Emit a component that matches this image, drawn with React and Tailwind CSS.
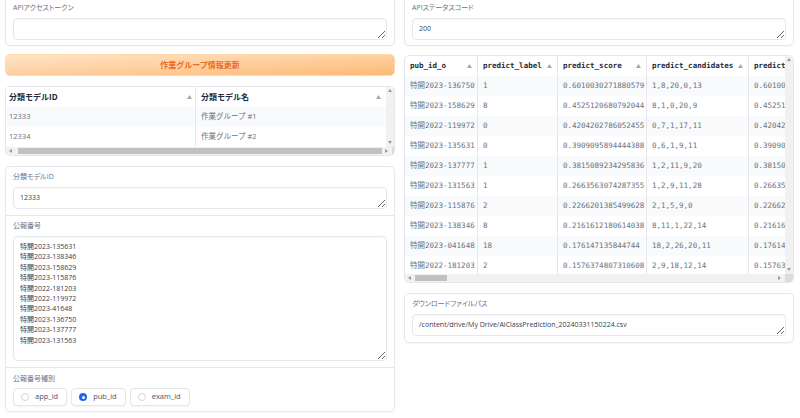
import React from 'react';

const sans = "font-['Open_Sans','Noto_Sans_CJK_JP',sans-serif]";
const mono = "font-['DejaVu_Sans_Mono','Noto_Sans_CJK_JP',monospace]";

const SortArrow = () => (
  <svg width="5" height="4" viewBox="0 0 5 4" className="shrink-0">
    <path d="M2.5 0 L5 4 L0 4 Z" fill="#a3a8b0" />
  </svg>
);

const Tri = ({ dir }) => {
  const d = {
    up: 'M2 0 L4 3 L0 3 Z',
    down: 'M0 0 L4 0 L2 3 Z',
    left: 'M3 0 L3 4 L0 2 Z',
    right: 'M0 0 L3 2 L0 4 Z',
  }[dir];
  return (
    <svg width="4" height="4" viewBox="0 0 4 4">
      <path d={d} fill="#9a9a9a" />
    </svg>
  );
};

const Label = ({ children }) => (
  <div className={`${sans} text-[7px] leading-[10px] text-gray-500 [font-feature-settings:'palt']`}>{children}</div>
);

const Field = ({ value, h }) => (
  <textarea
    readOnly
    defaultValue={value}
    className={`${sans} block w-full ${h} border border-gray-200 rounded-[4px] px-[6px] py-[5px] text-[7px] leading-[10.4px] text-gray-700 bg-white shadow-[inset_0_1px_1px_rgba(0,0,0,0.03)] outline-none`}
  />
);

const HScroll = ({ thumb }) => (
  <div className="flex h-[8px] bg-[#f1f1f1]">
    <div className="flex-1 flex items-center">
      <div className="w-[10px] flex justify-center"><Tri dir="left" /></div>
      <div className="flex-1 h-[6px] relative">
        <div className={`h-full bg-[#c1c1c1] ${thumb}`} />
      </div>
      <div className="w-[10px] flex justify-center"><Tri dir="right" /></div>
    </div>
    <div className="w-[8px] bg-[#dcdcdc]" />
  </div>
);

const VScroll = () => (
  <div className="w-[8px] bg-[#f1f1f1] flex flex-col justify-between items-center py-[2px]">
    <Tri dir="up" />
    <Tri dir="down" />
  </div>
);

const groups = [
  ['12333', '作業グループ #1'],
  ['12334', '作業グループ #2'],
];

const preds = [
  ['特開2023-136750', '1', '0.6010030271880579', '1,8,20,0,13'],
  ['特開2023-158629', '8', '0.4525120680792044', '8,1,0,20,9'],
  ['特開2022-119972', '0', '0.4204202786052455', '0,7,1,17,11'],
  ['特開2023-135631', '0', '0.3909095894444388', '0,6,1,9,11'],
  ['特開2023-137777', '1', '0.3815089234295836', '1,2,11,9,20'],
  ['特開2023-131563', '1', '0.2663563074287355', '1,2,9,11,28'],
  ['特開2023-115876', '2', '0.2266201385499628', '2,1,5,9,0'],
  ['特開2023-138346', '8', '0.2161612180614038', '8,11,1,22,14'],
  ['特開2023-041648', '18', '0.176147135844744', '18,2,26,20,11'],
  ['特開2022-181203', '2', '0.1576374807310608', '2,9,18,12,14'],
];

const pubNumbers = [
  '特開2023-135631',
  '特開2023-138346',
  '特開2023-158629',
  '特開2023-115876',
  '特開2022-181203',
  '特開2022-119972',
  '特開2023-41648',
  '特開2023-136750',
  '特開2023-137777',
  '特開2023-131563',
].join('\n');

const predCols = [
  { name: 'pub_id_o', w: 'w-[73px]' },
  { name: 'predict_label', w: 'w-[80px]' },
  { name: 'predict_score', w: 'w-[89px]' },
  { name: 'predict_candidates', w: 'w-[102px]' },
  { name: 'predict_score_max', w: 'w-[100px]' },
];

export default function App() {
  return (
    <div className="w-[800px] h-[418px] bg-white overflow-hidden">
      <div className="flex gap-[9px] px-[5px] -mt-[3px]">
        {/* Left column */}
        <div className="w-[390px] flex flex-col">
          <div className="border border-gray-200 rounded-[5px] px-[7px] pt-[5px] pb-[5px] shadow-[0_1px_2px_rgba(0,0,0,0.04)]">
            <Label>APIアクセストークン</Label>
            <div className="mt-[5px]"><Field value="" h="h-[22px]" /></div>
          </div>

          <button className={`${sans} mt-[8px] h-[22px] rounded-[5px] border border-orange-200 bg-gradient-to-br from-[#fee4c7] to-[#fdba74] text-[8px] font-semibold text-[#ea6a1f]`}>
            作業グループ情報更新
          </button>

          {/* Group table */}
          <div className="mt-[10px] border border-gray-200 rounded-[5px] overflow-hidden">
            <div className="flex">
              <div className="flex-1">
                <div className={`${sans} flex h-[20px] items-center text-[8px] font-bold text-gray-800 bg-white`}>
                  <div className="w-[190px] h-full flex items-center justify-between px-[3px] border-r border-gray-200">
                    <span>分類モデルID</span><SortArrow />
                  </div>
                  <div className="flex-1 h-full flex items-center justify-between px-[5px]">
                    <span>分類モデル名</span><SortArrow />
                  </div>
                </div>
                {groups.map((g, i) => (
                  <div key={g[0]} className={`${sans} flex h-[20px] items-center text-[7.5px] text-gray-500 ${i % 2 === 0 ? 'bg-gray-50' : 'bg-white'}`}>
                    <div className="w-[190px] h-full flex items-center px-[3px] border-r border-gray-200">{g[0]}</div>
                    <div className="flex-1 h-full flex items-center px-[5px]">{g[1]}</div>
                  </div>
                ))}
              </div>
              <VScroll />
            </div>
            <HScroll thumb="ml-[2px] w-[364px]" />
          </div>

          {/* Form block */}
          <div className="mt-[10px] border border-gray-200 rounded-[5px] shadow-[0_1px_2px_rgba(0,0,0,0.04)]">
            <div className="px-[7px] pt-[5px] pb-[6px] border-b border-gray-200">
              <Label>分類モデルID</Label>
              <div className="mt-[5px]"><Field value="12333" h="h-[22px]" /></div>
            </div>
            <div className="px-[7px] pt-[5px] pb-[6px] border-b border-gray-200">
              <Label>公報番号</Label>
              <div className="mt-[5px]"><Field value={pubNumbers} h="h-[125px]" /></div>
            </div>
            <div className="px-[7px] pt-[6px] pb-[5px]">
              <Label>公報番号種別</Label>
              <div className="mt-[4px] flex gap-[4px]">
                {['app_id', 'pub_id', 'exam_id'].map((r) => (
                  <div key={r} className={`${sans} h-[18px] flex items-center gap-[6px] pl-[7px] pr-[8px] border border-gray-200 rounded-[4px] bg-white shadow-[0_1px_1px_rgba(0,0,0,0.04)] text-[7.5px] text-gray-600`}>
                    {r === 'pub_id' ? (
                      <span className="w-[8px] h-[8px] rounded-full bg-[#2563eb] flex items-center justify-center">
                        <span className="w-[3px] h-[3px] rounded-full bg-white" />
                      </span>
                    ) : (
                      <span className="w-[8px] h-[8px] rounded-full border border-gray-300 bg-white" />
                    )}
                    <span>{r}</span>
                  </div>
                ))}
              </div>
            </div>
          </div>
        </div>

        {/* Right column */}
        <div className="w-[390px] flex flex-col">
          <div className="border border-gray-200 rounded-[5px] px-[7px] pt-[5px] pb-[5px] shadow-[0_1px_2px_rgba(0,0,0,0.04)]">
            <Label>APIステータスコード</Label>
            <div className="mt-[5px]"><Field value="200" h="h-[22px]" /></div>
          </div>

          {/* Prediction table */}
          <div className="mt-[9px] border border-gray-200 rounded-[5px] overflow-hidden">
            <div className="flex h-[218px]">
              <div className="flex-1 overflow-hidden">
                <div className={`${mono} w-[460px]`}>
                  <div className="flex h-[20px] text-[7.5px] font-bold text-gray-800">
                    {predCols.map((c, j) => (
                      <div key={c.name} className={`${c.w} shrink-0 h-full flex items-center justify-between px-[5px] ${j < 4 ? 'border-r border-gray-200' : ''}`}>
                        <span className="whitespace-nowrap">{c.name}</span>
                        {j < 4 && <SortArrow />}
                      </div>
                    ))}
                  </div>
                  {preds.map((p, i) => (
                    <div key={p[0]} className={`flex h-[20px] text-[7.5px] text-gray-500 ${i % 2 === 0 ? 'bg-gray-50' : 'bg-white'}`}>
                      {[p[0], p[1], p[2], p[3], p[2]].map((v, j) => (
                        <div key={j} className={`${predCols[j].w} shrink-0 h-full flex items-center px-[5px] whitespace-nowrap ${j < 4 ? 'border-r border-gray-200' : ''}`}>
                          {v}
                        </div>
                      ))}
                    </div>
                  ))}
                </div>
              </div>
              <VScroll />
            </div>
            <HScroll thumb="ml-[0px] w-[32px]" />
          </div>

          <div className="mt-[10px] border border-gray-200 rounded-[5px] px-[7px] pt-[5px] pb-[6px] shadow-[0_1px_2px_rgba(0,0,0,0.04)]">
            <Label>ダウンロードファイルパス</Label>
            <div className="mt-[5px]"><Field value="/content/drive/My Drive/AiClassPrediction_20240331150224.csv" h="h-[22px]" /></div>
          </div>
        </div>
      </div>
    </div>
  );
}
